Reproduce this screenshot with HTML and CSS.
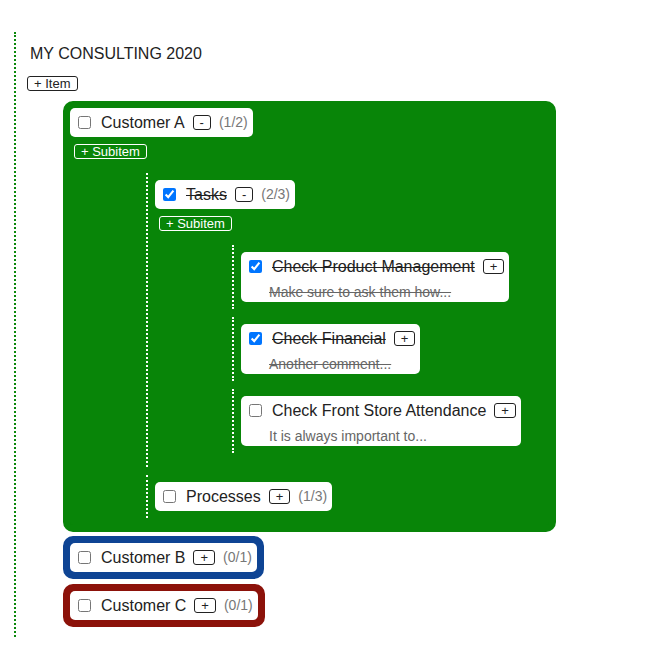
FILE: index.html
```html
<!DOCTYPE html>
<html>
<head>
<meta charset="utf-8">
<link rel="stylesheet" href="styles.css">
</head>
<body>
<div class="board">
  <h1 class="title">MY CONSULTING 2020</h1>
  <button class="btn">+ Item</button>
  <ul class="customers">
    <li class="customer green">
      <div class="card"><input type="checkbox"><span class="label">Customer A</span><button class="btn">-</button><span class="count">(1/2)</span></div>
      <button class="btn sub">+ Subitem</button>
      <ul class="children">
        <li class="child">
          <div class="card"><input type="checkbox" checked><span class="label done">Tasks</span><button class="btn">-</button><span class="count">(2/3)</span></div>
          <button class="btn sub">+ Subitem</button>
          <ul class="children deep">
            <li class="child">
              <div class="card leaf">
                <div class="row"><input type="checkbox" checked><span class="label done">Check Product Management</span><button class="btn">+</button></div>
                <div class="comment done">Make sure to ask them how...</div>
              </div>
            </li>
            <li class="child">
              <div class="card leaf">
                <div class="row"><input type="checkbox" checked><span class="label done">Check Financial</span><button class="btn">+</button></div>
                <div class="comment done">Another comment...</div>
              </div>
            </li>
            <li class="child">
              <div class="card leaf">
                <div class="row"><input type="checkbox"><span class="label">Check Front Store Attendance</span><button class="btn">+</button></div>
                <div class="comment">It is always important to...</div>
              </div>
            </li>
          </ul>
        </li>
        <li class="child">
          <div class="card"><input type="checkbox"><span class="label">Processes</span><button class="btn">+</button><span class="count">(1/3)</span></div>
        </li>
      </ul>
    </li>
    <li class="customer blue">
      <div class="card"><input type="checkbox"><span class="label">Customer B</span><button class="btn">+</button><span class="count">(0/1)</span></div>
    </li>
    <li class="customer red">
      <div class="card"><input type="checkbox"><span class="label">Customer C</span><button class="btn">+</button><span class="count">(0/1)</span></div>
    </li>
  </ul>
</div>
</body>
</html>
```

FILE: styles.css
```css
html, body {
  margin: 0;
  padding: 0;
  background: #fff;
}

body {
  font-family: "Liberation Sans", Arial, sans-serif;
  color: #222;
}

.board {
  margin: 32px 0 0 14px;
  border-left: 2px dotted #0a870a;
  padding: 13px 0 10px 11px;
}

.title {
  margin: 0 0 0 3px;
  font-size: 16px;
  line-height: 18px;
  font-weight: normal;
  color: #222;
}

.btn {
  font-family: "Liberation Sans", Arial, sans-serif;
  font-size: 13px;
  line-height: 13px;
  padding: 0 6px;
  border: 1px solid #222;
  border-radius: 3px;
  background: #fff;
  color: #222;
  margin: 0;
}

.board > .btn {
  display: block;
  margin-top: 13px;
}

.customers {
  list-style: none;
  margin: 10px 0 0;
  padding: 0 0 0 36px;
}

.customer {
  width: fit-content;
  border: 7px solid;
  border-radius: 10px;
  margin-bottom: 5px;
}

.customer.green {
  margin-bottom: 4px;
}

.customer:last-child {
  margin-bottom: 0;
}

.green {
  border-color: #088508;
  background: #088508;
}

.blue {
  border-color: #0e4494;
  background: #0e4494;
}

.red {
  border-color: #8c120a;
  background: #8c120a;
}

.card {
  width: fit-content;
  background: #fff;
  border-radius: 5px;
  padding: 5px 5px 5px 4px;
  display: flex;
  align-items: center;
  font-size: 16px;
  line-height: 19px;
  color: #222;
}

.card input {
  width: 13px;
  height: 13px;
  margin: 0 10px 1px 4px;
  flex: none;
}

.card .btn {
  margin-left: 8px;
}

.label {
  white-space: nowrap;
}

.done {
  text-decoration: line-through;
}

.count {
  margin-left: 8px;
  font-size: 14px;
  color: #777;
}

.btn.sub {
  display: block;
  margin: 7px 0 0 4px;
  background: transparent;
  border-color: #fff;
  color: #fff;
}

.children {
  list-style: none;
  margin: 14px 0 7px;
  padding: 0 0 0 76px;
}

.children.deep {
  padding-left: 77px;
}

.child {
  border-left: 2px dotted #fff;
  padding: 7px 14px 7px 7px;
  margin-bottom: 8px;
}

.child:last-child {
  margin-bottom: 0;
}

.card.leaf {
  display: block;
  padding-bottom: 2px;
}

.row {
  display: flex;
  align-items: center;
}

.comment {
  margin: 8px 0 0 24px;
  font-size: 14px;
  line-height: 16px;
  color: #666;
  white-space: nowrap;
}
```
